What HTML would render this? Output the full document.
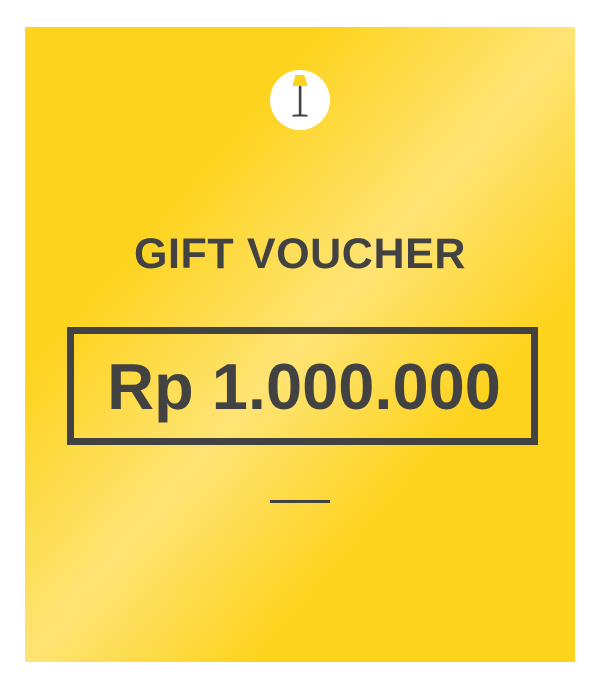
<!DOCTYPE html>
<html><head><style>
html,body{margin:0;padding:0;background:#fff;width:600px;height:690px;overflow:hidden}
.card{position:absolute;left:25px;top:27px;width:550px;height:635px;
background:linear-gradient(to bottom right,#FDD31D 0%,#FDD31D 27%,#FFE475 50%,#FDD31D 71%,#FDD31D 100%);}
.t{position:absolute;left:0;width:600px;text-align:center;font-family:"Liberation Sans",Arial,sans-serif;font-weight:bold;color:#424242}
.box{position:absolute;left:67px;top:327px;width:457px;height:104px;border:7px solid #424242}
.line{position:absolute;left:270px;top:500px;width:60px;height:3px;background:#424242}
.logo{position:absolute;left:270px;top:70px;width:60px;height:60px;border-radius:50%;background:#fff}
</style></head><body>
<div class="card"></div>
<div class="logo"><svg width="60" height="60" viewBox="0 0 60 60">
<path d="M25,5 L33,5 Q34,5 35,7 L37.5,16 L22.5,16 L25,7 Q25,5 25,5 Z" fill="#FDD31D"/>
<rect x="28.8" y="16" width="2.6" height="29" fill="#424242"/>
<path d="M22,46.5 Q22,44.5 26,44.5 L34,44.5 Q38,44.5 38,46.5 Z" fill="#424242"/>
</svg></div>
<div class="t" style="top:226px;font-size:43px;line-height:56px;letter-spacing:0.6px">GIFT VOUCHER</div>
<div class="box"></div>
<div class="t" style="top:347px;font-size:65px;line-height:80px;left:4px">Rp 1.000.000</div>
<div class="line"></div>
</body></html>
